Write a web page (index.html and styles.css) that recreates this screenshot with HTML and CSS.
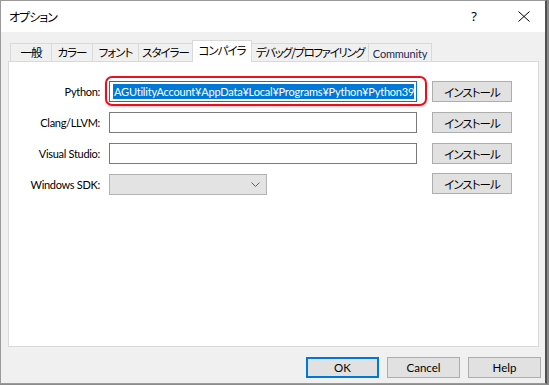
FILE: index.html
```html
<!DOCTYPE html>
<html lang="ja">
<head>
<meta charset="utf-8">
<title>オプション</title>
<link rel="stylesheet" href="styles.css">
</head>
<body>
<div class="window">
  <div class="titlebar">
    <span class="title">オプション</span>
    <span class="help-btn">?</span>
    <span class="close-btn">
      <svg width="12" height="11" viewBox="0 0 12 11"><path d="M0.5 0.5 L11.5 10.5 M11.5 0.5 L0.5 10.5" stroke="#000" stroke-width="1" fill="none"/></svg>
    </span>
  </div>
  <div class="client">
    <div class="tabs">
      <div class="tab t1">一般</div>
      <div class="tab t2">カラー</div>
      <div class="tab t3">フォント</div>
      <div class="tab t4">スタイラー</div>
      <div class="tab t5 selected">コンパイラ</div>
      <div class="tab t6">デバッグ/プロファイリング</div>
      <div class="tab t7 latin">Community</div>
    </div>
    <div class="panel">
      <div class="form">
        <div class="row">
          <span class="lbl">Python:</span>
          <div class="field focused"><span class="sel">AGUtilityAccount¥AppData¥Local¥Programs¥Python¥Python39</span><span class="caret"></span></div>
          <button class="btn install">インストール</button>
        </div>
        <div class="row">
          <span class="lbl">Clang/LLVM:</span>
          <div class="field"></div>
          <button class="btn install">インストール</button>
        </div>
        <div class="row">
          <span class="lbl">Visual Studio:</span>
          <div class="field"></div>
          <button class="btn install">インストール</button>
        </div>
        <div class="row">
          <span class="lbl">Windows SDK:</span>
          <div class="combo">
            <svg class="chev" width="9" height="5" viewBox="0 0 9 5"><path d="M0.5 0.5 L4.5 4.5 L8.5 0.5" stroke="#606060" stroke-width="1" fill="none"/></svg>
          </div>
          <button class="btn install install-sdk">インストール</button>
        </div>
      </div>
      <div class="annot"></div>
    </div>
    <div class="footer">
      <button class="btn dlg ok">OK</button>
      <button class="btn dlg">Cancel</button>
      <button class="btn dlg">Help</button>
    </div>
  </div>
</div>
</body>
</html>
```

FILE: styles.css
```css
html, body {
  margin: 0;
  padding: 0;
}
body {
  width: 549px;
  height: 385px;
  overflow: hidden;
  background: #8c8c8c;
  font-family: Lato, "Noto Sans CJK JP", sans-serif;
  font-size: 11px;
  color: #000;
}
.window {
  width: 544px;
  height: 382px;
  border: 1px solid #9a9a9a;
  border-right: 2px solid #505050;
  background: #f0f0f0;
  display: flex;
  flex-direction: column;
}
.titlebar {
  height: 31px;
  background: #fff;
  display: flex;
  align-items: center;
  flex: none;
}
.title {
  font-family: "Noto Sans CJK JP", sans-serif;
  font-feature-settings: "palt";
  font-size: 12px;
  letter-spacing: -1px;
  margin-left: 8px;
  margin-top: -1px;
}
.help-btn {
  margin-left: auto;
  font-family: "Noto Sans", sans-serif;
  font-size: 13px;
  margin-right: 41px;
  margin-top: -1px;
}
.close-btn {
  display: flex;
  margin-right: 15px;
  margin-top: -1px;
}
.client {
  flex: 1;
  padding: 8px 4px 5px 7px;
  display: flex;
  flex-direction: column;
}
.tabs {
  display: flex;
  align-items: flex-end;
  height: 21px;
  padding-left: 2px;
  position: relative;
  z-index: 1;
}
.tab {
  box-sizing: border-box;
  height: 18px;
  border: 1px solid #d9d9d9;
  border-bottom: none;
  margin-right: -1px;
  background: #f0f0f0;
  display: flex;
  align-items: center;
  justify-content: center;
  font-family: "Noto Sans CJK JP", sans-serif;
  font-feature-settings: "palt";
  font-size: 11.5px;
  letter-spacing: -1px;
  white-space: nowrap;
  line-height: 1;
  padding-top: 1px;
}
.tab.latin {
  font-family: Lato, sans-serif;
  font-size: 11px;
  letter-spacing: -0.2px;
  color: #1c2a55;
}
.tab.selected {
  height: 22px;
  margin-bottom: -1px;
  background: #fff;
  padding-bottom: 3px;
}
.t1 { width: 42px; }
.t2 { width: 42px; }
.t3 { width: 47px; }
.t4 { width: 55px; }
.t5 { width: 60px; }
.t6 { width: 118px; letter-spacing: -1.4px; }
.t7 { width: 64px; }
.panel {
  box-sizing: border-box;
  width: 531px;
  height: 286px;
  border: 1px solid #d9d9d9;
  background: #fff;
  position: relative;
  padding-top: 19px;
}
.form {
  display: flex;
  flex-direction: column;
  gap: 10px;
}
.row {
  display: flex;
  align-items: center;
  height: 21px;
}
.lbl {
  width: 91px;
  margin-right: 9px;
  text-align: right;
  white-space: nowrap;
  letter-spacing: -0.3px;
}
.field {
  box-sizing: border-box;
  width: 308px;
  height: 21px;
  border: 1px solid #7a7a7a;
  background: #fff;
}
.field.focused {
  border-color: #0078d7;
  padding: 2px 3px 2px 3px;
  display: flex;
  align-items: stretch;
  overflow: hidden;
}
.sel {
  background: #0078d7;
  color: #fff;
  white-space: nowrap;
  line-height: 15px;
  padding-left: 1px;
  letter-spacing: -0.2px;
}
.caret {
  width: 1px;
  background: #000;
}
.combo {
  box-sizing: border-box;
  width: 158px;
  height: 21px;
  border: 1px solid #b3b3b3;
  background: #e3e3e3;
  display: flex;
  align-items: center;
  justify-content: flex-end;
  padding-right: 6px;
}
.btn {
  box-sizing: border-box;
  height: 21px;
  border: 1px solid #adadad;
  background: #e1e1e1;
  font: inherit;
  color: #000;
  padding: 0;
  display: flex;
  align-items: center;
  justify-content: center;
}
.install {
  width: 80px;
  margin-left: 15px;
  font-family: "Noto Sans CJK JP", sans-serif;
  font-feature-settings: "palt";
  font-size: 11.5px;
  letter-spacing: -1px;
}
.install-sdk {
  margin-left: 165px;
  margin-top: -2px;
}
.annot {
  position: absolute;
  left: 96px;
  top: 14px;
  width: 322px;
  height: 30px;
  box-sizing: border-box;
  border: 2px solid #e8111f;
  border-radius: 7px;
  box-shadow: 0 1px 2px rgba(200, 0, 0, 0.25);
}
.footer {
  display: flex;
  justify-content: flex-end;
  gap: 8px;
  margin-top: 10px;
}
.dlg {
  width: 73px;
  font-size: 11.5px;
}
.ok {
  border: 2px solid #0078d7;
}
```
